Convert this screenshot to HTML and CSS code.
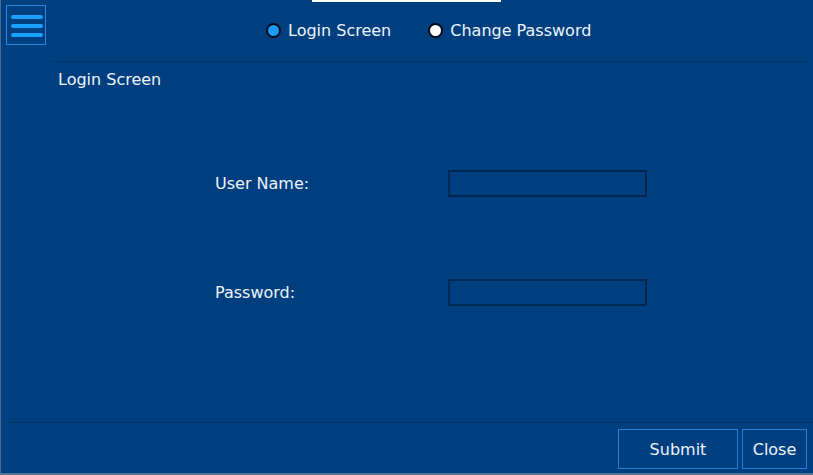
FILE: index.html
```html
<!DOCTYPE html>
<html lang="en">
<head>
<meta charset="utf-8">
<title>Login Screen</title>
<link rel="stylesheet" href="styles.css">
</head>
<body>
<div class="app">
  <header class="header">
    <span class="tab-strip"></span>
    <button class="menu-btn" aria-label="Menu">
      <span class="bar"></span><span class="bar"></span><span class="bar"></span>
    </button>
    <div class="modes">
      <label class="mode"><span class="radio radio-on"></span>Login Screen</label>
      <label class="mode"><span class="radio radio-off"></span>Change Password</label>
    </div>
  </header>
  <div class="divider"></div>
  <main class="content">
    <div class="title">Login Screen</div>
    <form class="form">
      <span class="field-label">User Name:</span>
      <span class="field-input"></span>
      <span class="field-label">Password:</span>
      <span class="field-input"></span>
    </form>
  </main>
  <footer class="footer">
    <button class="btn btn-submit">Submit</button>
    <button class="btn btn-close">Close</button>
  </footer>
</div>
</body>
</html>
```
FILE: styles.css
```css
* { box-sizing: border-box; }

html, body {
  margin: 0;
  padding: 0;
  background: #003f7f;
}

body {
  font-family: "DejaVu Sans", Verdana, sans-serif;
  font-size: 16px;
  color: #eef3fb;
}

.app {
  width: 813px;
  height: 475px;
  display: flex;
  flex-direction: column;
  border-left: 1px solid #4a6a92;
  border-bottom: 2px solid #56708f;
  background: #003f7f;
}

/* top bar with menu and mode switch */
.header {
  position: relative;
  display: flex;
  align-items: center;
  height: 61px;
  padding: 5px 0 16px 5px;
}

.tab-strip {
  position: absolute;
  top: 0;
  left: 311px;
  width: 189px;
  height: 2px;
  background: #ffffff;
}

.menu-btn {
  width: 40px;
  height: 40px;
  padding: 1px 0 0 4px;
  margin: 0;
  border: 1px solid #2585e0;
  background: transparent;
  display: flex;
  flex-direction: column;
  justify-content: center;
  gap: 5px;
}

.bar {
  display: block;
  width: 32px;
  height: 4px;
  border-radius: 2px;
  background: #1aa0ff;
}

.modes {
  display: flex;
  align-items: center;
  gap: 37px;
  margin-left: 220px;
  margin-top: 10px;
}

.mode {
  display: flex;
  align-items: center;
  gap: 7px;
  line-height: 19px;
}

.radio {
  width: 15px;
  height: 15px;
  border-radius: 50%;
  border: 2px solid #020a16;
}

.radio-on { background: #1a9cff; }
.radio-off { background: #ffffff; }

.divider {
  height: 1px;
  margin: 0 5px 0 51px;
  background: #00336a;
}

.content {
  flex: 1;
  padding-left: 57px;
}

.title {
  margin-top: 8px;
  line-height: 19px;
}

.form {
  display: grid;
  grid-template-columns: 233px 199px;
  grid-auto-rows: 27px;
  row-gap: 82px;
  align-items: center;
  margin: 81px 0 0 157px;
}

.field-label {
  line-height: 19px;
}

.field-input {
  height: 27px;
  border: 2px solid #012650;
  background: #003f7f;
}

.footer {
  display: flex;
  justify-content: flex-end;
  gap: 4px;
  margin-left: 7px;
  padding: 6px 6px 4px 0;
  border-top: 1px solid #00336a;
}

.btn {
  height: 40px;
  margin: 0;
  border: 1px solid #1f7fd8;
  background: transparent;
  color: #eef3fb;
  font-family: "DejaVu Sans", Verdana, sans-serif;
  font-size: 16px;
  padding: 0;
}

.btn-submit { width: 120px; }
.btn-close { width: 65px; }
```
